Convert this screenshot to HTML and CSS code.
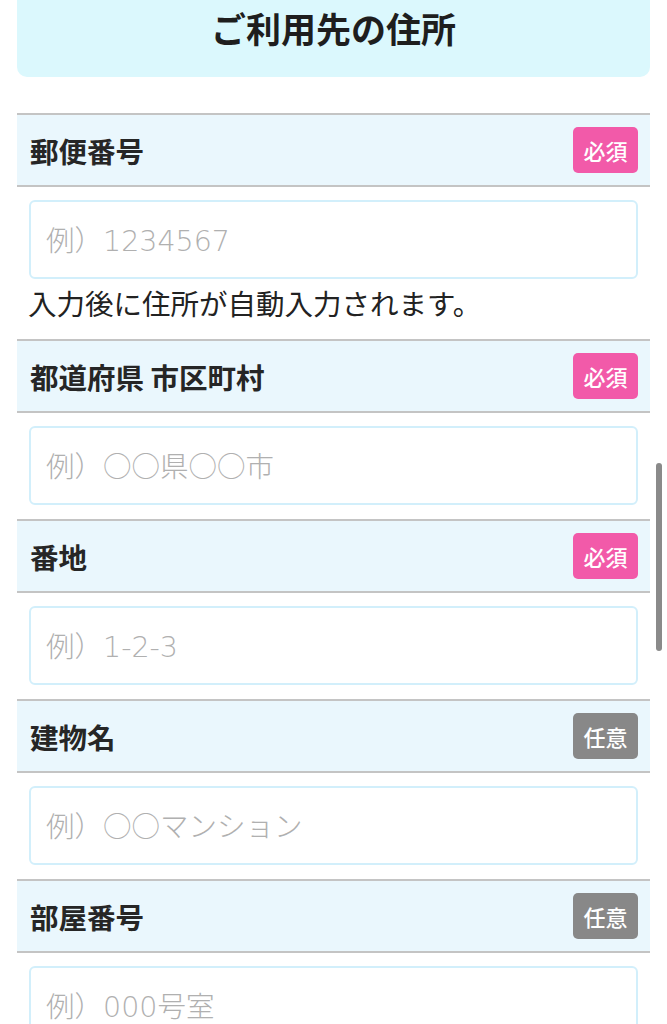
FILE: index.html
```html
<!DOCTYPE html>
<html lang="ja">
<head>
    <meta charset="UTF-8">
    <meta name="viewport" content="width=device-width, initial-scale=1.0">
    <title>ご利用先の住所</title>
    <link rel="stylesheet" href="styles.css">
</head>
<body>
    <main class="page">
        <h2 class="section-title">ご利用先の住所</h2>

        <!-- 郵便番号 -->
        <div class="field">
            <div class="field-head">
                <span class="field-label">郵便番号</span>
                <span class="badge badge-required">必須</span>
            </div>
            <div class="field-body">
                <input type="text" class="field-input" placeholder="例）1234567">
                <p class="field-help">入力後に住所が自動入力されます。</p>
            </div>
        </div>

        <!-- 都道府県 市区町村 -->
        <div class="field">
            <div class="field-head">
                <span class="field-label">都道府県 市区町村</span>
                <span class="badge badge-required">必須</span>
            </div>
            <div class="field-body">
                <input type="text" class="field-input" placeholder="例）○○県○○市">
            </div>
        </div>

        <!-- 番地 -->
        <div class="field">
            <div class="field-head">
                <span class="field-label">番地</span>
                <span class="badge badge-required">必須</span>
            </div>
            <div class="field-body">
                <input type="text" class="field-input" placeholder="例）1-2-3">
            </div>
        </div>

        <!-- 建物名 -->
        <div class="field">
            <div class="field-head">
                <span class="field-label">建物名</span>
                <span class="badge badge-optional">任意</span>
            </div>
            <div class="field-body">
                <input type="text" class="field-input" placeholder="例）○○マンション">
            </div>
        </div>

        <!-- 部屋番号 -->
        <div class="field">
            <div class="field-head">
                <span class="field-label">部屋番号</span>
                <span class="badge badge-optional">任意</span>
            </div>
            <div class="field-body">
                <input type="text" class="field-input" placeholder="例）000号室">
            </div>
        </div>
    </main>

    <div class="scroll-thumb"></div>
</body>
</html>
```

FILE: styles.css
```css
body {
    margin: 0;
    padding: 0;
    background-color: #fff;
    color: #222;
    font-family: "Noto Sans CJK JP", "Noto Sans", sans-serif;
}

.page {
    padding: 0 17px;
}

.section-title {
    margin: 0 0 36px;
    height: 77px;
    padding-top: 4px;
    box-sizing: border-box;
    background-color: #dbf8fd;
    border-radius: 0 0 10px 10px;
    text-align: center;
    font-size: 35px;
    line-height: 48px;
    font-weight: 700;
    color: #1e1e1e;
}

.field-head {
    display: flex;
    align-items: center;
    justify-content: space-between;
    height: 74px;
    box-sizing: border-box;
    padding: 0 12px 0 13px;
    background-color: #eaf7fd;
    border-top: 2px solid #c4c4c4;
    border-bottom: 2px solid #c4c4c4;
}

.field-label {
    font-size: 28.5px;
    font-weight: 700;
    color: #262626;
}

.badge {
    display: flex;
    align-items: center;
    justify-content: center;
    width: 65px;
    height: 46px;
    border-radius: 5px;
    color: #fff;
    font-size: 22px;
    font-weight: 500;
}

.badge-required {
    background-color: #f25aa9;
}

.badge-optional {
    background-color: #888;
}

.field-body {
    padding: 13px 12px 14px;
}

.field-input {
    display: block;
    width: 100%;
    height: 79px;
    box-sizing: border-box;
    margin: 0;
    padding: 4px 15px 0;
    border: 2px solid #d2effb;
    border-radius: 6px;
    background-color: #fff;
    font-family: "DejaVu Sans", "Noto Sans CJK JP", sans-serif;
    font-size: 28.5px;
    font-weight: 300;
    color: #222;
    outline: none;
}

.field-input::placeholder {
    color: #b0b0b0;
}

.field-help {
    margin: 4px 0 2px -1px;
    font-size: 28.5px;
    line-height: 40px;
    color: #222;
}

/* overlay scrollbar from the device */
.scroll-thumb {
    position: fixed;
    left: 656px;
    top: 463px;
    width: 6px;
    height: 188px;
    border-radius: 3px;
    background-color: #8a8a8a;
}
```
